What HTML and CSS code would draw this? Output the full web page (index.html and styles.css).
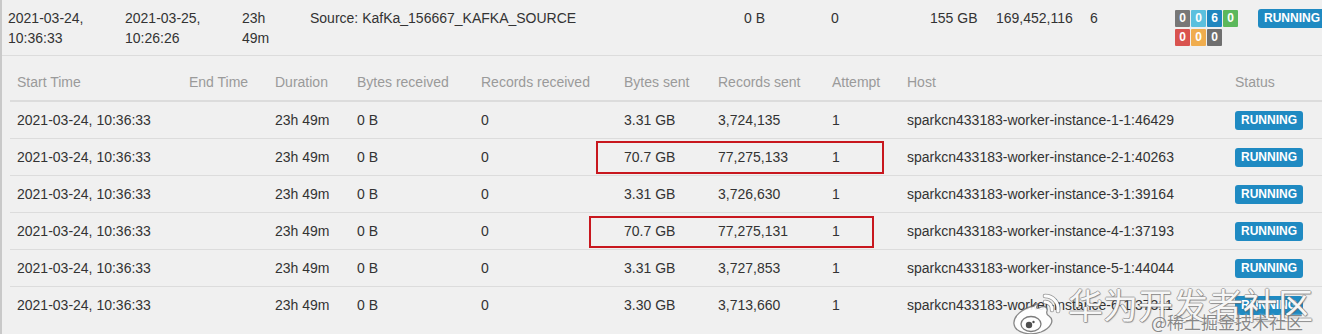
FILE: index.html
```html
<!DOCTYPE html>
<html>
<head>
<meta charset="utf-8">
<link rel="stylesheet" href="styles.css">
</head>
<body>
<div class="page">
  <table class="jobs">
    <colgroup>
      <col class="c1"><col class="c2"><col class="c3"><col class="c4"><col class="c5"><col class="c6"><col class="c7"><col class="c8"><col class="c9"><col class="c10"><col class="c11">
    </colgroup>
    <tbody>
      <tr class="vertex">
        <td class="first">2021-03-24, 10:36:33</td>
        <td>2021-03-25, 10:26:26</td>
        <td>23h 49m</td>
        <td>Source: KafKa_156667_KAFKA_SOURCE</td>
        <td>0 B</td>
        <td>0</td>
        <td class="nw">155 GB</td>
        <td class="nw">169,452,116</td>
        <td>6</td>
        <td>
          <div class="counts">
            <span class="cnt gray">0</span><span class="cnt info">0</span><span class="cnt primary">6</span><span class="cnt success">0</span><span class="cnt danger">0</span><span class="cnt warning">0</span><span class="cnt dark">0</span>
          </div>
        </td>
        <td class="nw"><span class="state">RUNNING</span></td>
      </tr>
      <tr>
        <td class="nested" colspan="11">
          <table class="subtasks">
            <colgroup>
              <col class="s1"><col class="s2"><col class="s3"><col class="s4"><col class="s5"><col class="s6"><col class="s7"><col class="s8"><col class="s9"><col class="s10">
            </colgroup>
            <thead>
              <tr>
                <th>Start Time</th><th>End Time</th><th>Duration</th><th>Bytes received</th><th>Records received</th><th>Bytes sent</th><th>Records sent</th><th>Attempt</th><th>Host</th><th>Status</th>
              </tr>
            </thead>
            <tbody>
              <tr><td>2021-03-24, 10:36:33</td><td></td><td>23h 49m</td><td>0 B</td><td>0</td><td>3.31 GB</td><td>3,724,135</td><td>1</td><td>sparkcn433183-worker-instance-1-1:46429</td><td><span class="state">RUNNING</span></td></tr>
              <tr><td>2021-03-24, 10:36:33</td><td></td><td>23h 49m</td><td>0 B</td><td>0</td><td>70.7 GB</td><td>77,275,133</td><td>1</td><td>sparkcn433183-worker-instance-2-1:40263</td><td><span class="state">RUNNING</span></td></tr>
              <tr><td>2021-03-24, 10:36:33</td><td></td><td>23h 49m</td><td>0 B</td><td>0</td><td>3.31 GB</td><td>3,726,630</td><td>1</td><td>sparkcn433183-worker-instance-3-1:39164</td><td><span class="state">RUNNING</span></td></tr>
              <tr><td>2021-03-24, 10:36:33</td><td></td><td>23h 49m</td><td>0 B</td><td>0</td><td>70.7 GB</td><td>77,275,131</td><td>1</td><td>sparkcn433183-worker-instance-4-1:37193</td><td><span class="state">RUNNING</span></td></tr>
              <tr><td>2021-03-24, 10:36:33</td><td></td><td>23h 49m</td><td>0 B</td><td>0</td><td>3.31 GB</td><td>3,727,853</td><td>1</td><td>sparkcn433183-worker-instance-5-1:44044</td><td><span class="state">RUNNING</span></td></tr>
              <tr><td>2021-03-24, 10:36:33</td><td></td><td>23h 49m</td><td>0 B</td><td>0</td><td>3.30 GB</td><td>3,713,660</td><td>1</td><td>sparkcn433183-worker-instance-6-1:37311</td><td><span class="state">RUNNING</span></td></tr>
            </tbody>
          </table>
        </td>
      </tr>
    </tbody>
  </table>

  <div class="mark mark-a"></div>
  <div class="mark mark-b"></div>

  <div class="watermark">
    <svg class="weibo" width="54" height="46" viewBox="0 0 54 46">
      <path d="M24 15 C12 17 3 26 4 33 C5 42 20 45 31 41 C41 37 45 29 39 25 C37 24 36 23 37 20 C38 16 34 14 29 17 C27 18 26 17 27 15 C28 11 26 13 24 15 Z" fill="rgba(255,255,255,0.9)" stroke="rgba(90,90,90,0.7)" stroke-width="1.3"/>
      <ellipse cx="21" cy="33" rx="10" ry="7.5" fill="rgba(255,255,255,0.95)" stroke="rgba(80,80,80,0.75)" stroke-width="1.3"/>
      <circle cx="19" cy="34" r="3.2" fill="rgba(60,60,60,0.9)"/>
      <circle cx="23.5" cy="31" r="1.2" fill="rgba(60,60,60,0.9)"/>
      <path d="M35 5 A13 13 0 0 1 48 20" stroke="rgba(90,90,90,0.6)" stroke-width="4.6" fill="none" stroke-linecap="round"/>
      <path d="M35 5 A13 13 0 0 1 48 20" stroke="rgba(255,255,255,0.98)" stroke-width="3" fill="none" stroke-linecap="round"/>
      <path d="M35 11 A7 7 0 0 1 42 19" stroke="rgba(90,90,90,0.6)" stroke-width="4.4" fill="none" stroke-linecap="round"/>
      <path d="M35 11 A7 7 0 0 1 42 19" stroke="rgba(255,255,255,0.98)" stroke-width="2.8" fill="none" stroke-linecap="round"/>
    </svg>
    <div class="wm-text">
      <div class="wm-big">华为开发者社区</div>
      <div class="wm-small">@稀土掘金技术社区</div>
    </div>
  </div>
</div>
</body>
</html>
```

FILE: styles.css
```css
html, body {
  margin: 0;
  padding: 0;
  background: #f0f0f0;
  overflow: hidden;
}

body {
  width: 1322px;
  height: 334px;
  font-family: "Liberation Sans", Arial, sans-serif;
  font-size: 14px;
  line-height: 20px;
  color: #333;
}

.page {
  position: relative;
  height: 334px;
  border-left: 2px solid #c9c9c9;
  background: #f0f0f0;
  overflow: hidden;
}

table {
  border-collapse: collapse;
  border-spacing: 0;
  table-layout: fixed;
}

.jobs {
  width: 1348px;
}

.jobs col.c1 { width: 115px; }
.jobs col.c2 { width: 117px; }
.jobs col.c3 { width: 68px; }
.jobs col.c4 { width: 434px; }
.jobs col.c5 { width: 87px; }
.jobs col.c6 { width: 99px; }
.jobs col.c7 { width: 66px; }
.jobs col.c8 { width: 94px; }
.jobs col.c9 { width: 85px; }
.jobs col.c10 { width: 83px; }
.jobs col.c11 { width: 100px; }

.vertex > td {
  padding: 8px 8px 7px 8px;
  vertical-align: top;
  text-align: left;
  color: #333;
  border-bottom: 1px solid #dcdcdc;
}

.vertex > td.first {
  padding-left: 6px;
}

.nw {
  white-space: nowrap;
}

.counts {
  display: flex;
  flex-wrap: wrap;
  gap: 2px 1px;
  padding-top: 2px;
}

.cnt {
  display: block;
  width: 15px;
  height: 17px;
  box-sizing: border-box;
  font-size: 12px;
  font-weight: bold;
  line-height: 17px;
  text-align: center;
  color: #fff;
  border-radius: 1px;
}

.cnt.gray { background: #777777; }
.cnt.info { background: #5bc0de; }
.cnt.primary { background: #1f86bf; }
.cnt.success { background: #5cb85c; }
.cnt.danger { background: #d9534f; }
.cnt.warning { background: #f0ad4e; }
.cnt.dark { background: #6f6f6f; }

.state {
  display: inline-block;
  padding: 3px 6px;
  font-size: 12px;
  font-weight: bold;
  line-height: 13px;
  color: #fff;
  background: #1f8ac2;
  border-radius: 3px;
  vertical-align: 1px;
}

.nested {
  padding: 8px 8px 0 8px;
}

.subtasks {
  width: 1330px;
}

.subtasks col.s1 { width: 172px; }
.subtasks col.s2 { width: 86px; }
.subtasks col.s3 { width: 82px; }
.subtasks col.s4 { width: 124px; }
.subtasks col.s5 { width: 143px; }
.subtasks col.s6 { width: 94px; }
.subtasks col.s7 { width: 114px; }
.subtasks col.s8 { width: 75px; }
.subtasks col.s9 { width: 328px; }
.subtasks col.s10 { width: 112px; }

.subtasks th {
  padding: 8px 8px 8px 7px;
  text-align: left;
  font-weight: normal;
  color: #9a9a9a;
  white-space: nowrap;
  border-bottom: 2px solid #dcdcdc;
}

.subtasks td {
  padding: 8px 8px 8px 7px;
  text-align: left;
  color: #333;
  white-space: nowrap;
  border-top: 1px solid #dcdcdc;
}

.subtasks tbody tr:first-child td {
  border-top: none;
}

.mark {
  position: absolute;
  box-sizing: border-box;
  border: 2px solid #c8171e;
}

.mark-a {
  left: 594px;
  top: 141px;
  width: 288px;
  height: 33px;
}

.mark-b {
  left: 587px;
  top: 216px;
  width: 285px;
  height: 32px;
}

.watermark {
  position: absolute;
  left: 1008px;
  top: 283px;
  display: flex;
  align-items: flex-start;
  gap: 4px;
  pointer-events: none;
}

.weibo {
  display: block;
  margin-top: 8px;
}

.wm-text {
  position: relative;
  font-family: "Noto Sans CJK SC", sans-serif;
}

.wm-big {
  font-size: 35px;
  line-height: 42px;
  color: rgba(255, 255, 255, 0.95);
  text-shadow:
    1px 0 0 rgba(120, 120, 120, 0.55),
    -1px 0 0 rgba(120, 120, 120, 0.55),
    0 1px 0 rgba(120, 120, 120, 0.55),
    0 -1px 0 rgba(120, 120, 120, 0.55),
    1px 1px 1px rgba(60, 60, 60, 0.35);
  white-space: nowrap;
}

.wm-small {
  position: absolute;
  left: 83px;
  top: 29px;
  font-size: 17px;
  line-height: 20px;
  color: rgba(105, 105, 105, 0.8);
  text-shadow: 0 0 2px rgba(255, 255, 255, 0.95);
  white-space: nowrap;
}
```
